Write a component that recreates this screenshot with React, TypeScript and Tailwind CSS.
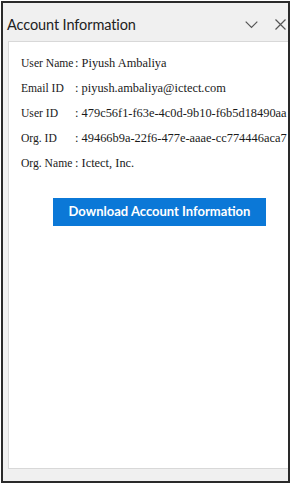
import React from "react";

const rows: [string, string][] = [
  ["User Name", "Piyush Ambaliya"],
  ["Email ID", "piyush.ambaliya@ictect.com"],
  ["User ID", "479c56f1-f63e-4c0d-9b10-f6b5d18490aa"],
  ["Org. ID", "49466b9a-22f6-477e-aaae-cc774446aca7"],
  ["Org. Name", "Ictect, Inc."],
];

export default function App() {
  return (
    <div className="w-[291px] h-[484px] bg-white p-[1px]">
      <div className="w-full h-full border-2 border-[#2a2a2a] bg-[#f0f0f0] flex flex-col overflow-hidden">
        <div className="h-[38px] flex items-center pl-[4px] pr-[1px] shrink-0">
          <div
            className="flex-1 text-[14.5px] tracking-[-0.1px] text-[#222] pt-[5px]"
            style={{ fontFamily: 'Lato, "Noto Sans", sans-serif' }}
          >
            Account Information
          </div>
          <svg width="13" height="8" viewBox="0 0 13 8" className="mr-[17px] mt-[6px]">
            <path d="M0.7 0.7 L6.5 6.5 L12.3 0.7" stroke="#555" strokeWidth="1.2" fill="none" />
          </svg>
          <svg width="11" height="11" viewBox="0 0 11 11" className="mr-[1px] mt-[5px]">
            <path d="M0.5 0.5 L10.5 10.5 M10.5 0.5 L0.5 10.5" stroke="#555" strokeWidth="1.2" fill="none" />
          </svg>
        </div>
        <div className="ml-[5px] mb-[12px] flex-1 bg-white border border-r-0 border-[#d8d8d8] pt-[8px] pl-[12px]">
          <div
            className="flex flex-col text-[12.4px] text-[#1a1a1a]"
            style={{ fontFamily: '"Liberation Serif", "Times New Roman", serif' }}
          >
            {rows.map(([k, v]) => (
              <div key={k} className="flex items-baseline h-[25px] pt-[4px] whitespace-nowrap">
                <span className="w-[54px] shrink-0 text-[11.6px]">{k}</span>
                <span>:&nbsp;{v}</span>
              </div>
            ))}
          </div>
          <div className="mt-[23px] ml-[32px]">
            <button
              className="w-[213px] h-[28px] bg-[#0b78d7] text-white text-[13px] font-bold"
              style={{ fontFamily: 'Lato, "Noto Sans", sans-serif' }}
            >
              Download Account Information
            </button>
          </div>
        </div>
      </div>
    </div>
  );
}
